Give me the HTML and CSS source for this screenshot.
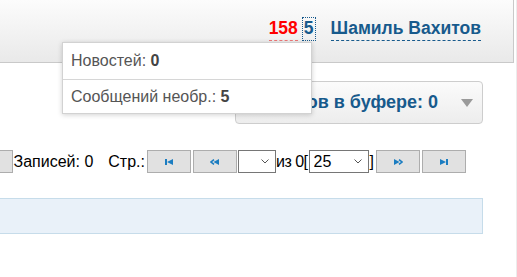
FILE: index.html
```html
<!DOCTYPE html>
<html lang="ru">
<head>
    <meta charset="UTF-8">
    <meta name="viewport" content="width=device-width, initial-scale=1.0">
    <title>Документы</title>
    <link rel="stylesheet" href="styles.css">
</head>
<body>
    <div class="page">
        <div class="top-bar">
            <div class="user-bar">
                <a class="cnt-news" href="#">158</a>
                <a class="cnt-msg" href="#">5</a>
                <a class="user-name" href="#">Шамиль Вахитов</a>
            </div>
        </div>
        <!-- выпадашка уведомлений -->
        <div class="notify-menu">
            <div class="notify-row first">Новостей: <b>0</b></div>
            <div class="notify-row">Сообщений необр.: <b>5</b></div>
        </div>
        <div class="content">
            <div class="tool-line">
                <div class="buffer-btn">
                    <span class="buffer-text">Документов в буфере: 0</span>
                    <span class="caret"></span>
                </div>
            </div>
            <div class="pager">
                <button class="pg-btn"></button>
                <span class="pg-total">Записей: 0</span>
                <span class="pg-label">Стр.:</span>
                <button class="pg-btn">
                    <svg width="8" height="6" viewBox="0 0 8 6"><rect x="0" y="0" width="2" height="6"/><polygon points="2,3 8,0 8,6"/></svg>
                </button>
                <button class="pg-btn sp">
                    <svg width="9" height="6" viewBox="0 0 9 6"><polyline points="4,0.6 1,3 4,5.4" fill="none" stroke-width="1.6"/><polygon points="3.5,3 9,0 9,6"/></svg>
                </button>
                <span class="sel sel-page">
                    <select><option></option></select>
                    <svg class="chev" width="8" height="5" viewBox="0 0 8 5"><polyline points="0.5,0.5 4,4 7.5,0.5"/></svg>
                </span>
                <span class="pg-of">из 0[</span>
                <span class="sel sel-size">
                    <select><option>25</option><option>50</option><option>100</option></select>
                    <svg class="chev" width="8" height="5" viewBox="0 0 8 5"><polyline points="0.5,0.5 4,4 7.5,0.5"/></svg>
                </span>
                <span class="pg-close">]</span>
                <button class="pg-btn sp">
                    <svg width="9" height="6" viewBox="0 0 9 6"><polygon points="0,0 5.5,3 0,6"/><polyline points="5,0.6 8,3 5,5.4" fill="none" stroke-width="1.6"/></svg>
                </button>
                <button class="pg-btn sp">
                    <svg width="8" height="6" viewBox="0 0 8 6"><polygon points="0,0 6,3 0,6"/><rect x="6" y="0" width="2" height="6"/></svg>
                </button>
            </div>
            <div class="grid-head"></div>
        </div>
    </div>
</body>
</html>
```

FILE: styles.css
```css
body,div,a,span,button,select {
    margin: 0;
    padding: 0;
}
body {
    font-family: "Liberation Sans", Arial, sans-serif;
    font-size: 16px;
    color: #000;
    background: #fff;
}
.page {
    position: relative;
    width: 516px;
    height: 277px;
    border-right: 1px solid #ececec;
    overflow: hidden;
}
.top-bar {
    width: 513px;
    height: 62px;
    background: linear-gradient(#fcfcfc, #e9e9e9);
    border-bottom: 1px solid #c9c9c9;
    border-right: 1px solid #c9c9c9;
}
.top-bar .user-bar {
    display: flex;
    justify-content: flex-end;
    align-items: baseline;
    padding: 18px 32px 0 0;
    font-size: 17.5px;
}
.top-bar .user-bar a {
    font-weight: 700;
    text-decoration: none;
    padding-bottom: 1px;
}
.top-bar .cnt-news {
    color: #f00;
    border-bottom: 1px dashed #e77;
}
.top-bar .cnt-msg {
    color: #175a8c;
    margin-left: 5px;
    padding: 0 1px;
    outline: 1px dotted #175a8c;
}
.top-bar .user-name {
    color: #175a8c;
    margin-left: 16px;
    border-bottom: 1px dashed #175a8c;
}
.notify-menu {
    position: absolute;
    left: 62px;
    top: 42px;
    width: 248px;
    background: #fff;
    border: 1px solid #d2d2d2;
    box-shadow: 0 1px 5px rgba(0,0,0,.18);
    z-index: 10;
    color: #555;
}
.notify-menu .notify-row {
    padding: 8px 8px 7px;
    line-height: 18px;
}
.notify-menu .notify-row.first {
    padding: 9px 8px 9px;
    border-bottom: 1px solid #d6d6d6;
}
.notify-menu b {
    color: #444;
}
.content {
    padding: 18px 33px 0 0;
}
.tool-line {
    display: flex;
    justify-content: flex-end;
}
.buffer-btn {
    width: 248px;
    height: 43px;
    box-sizing: border-box;
    display: flex;
    align-items: center;
    justify-content: flex-end;
    padding-right: 9px;
    border: 1px solid #cdcdcd;
    border-radius: 4px;
    background: linear-gradient(#fbfbfb, #ededed);
    overflow: hidden;
    white-space: nowrap;
}
.buffer-btn .buffer-text {
    color: #175a8c;
    font-size: 18px;
    font-weight: 700;
}
.buffer-btn .caret {
    width: 0;
    height: 0;
    margin-left: 23px;
    border-left: 6px solid transparent;
    border-right: 6px solid transparent;
    border-top: 8px solid #9a9a9a;
}
.pager {
    display: flex;
    justify-content: flex-end;
    align-items: center;
    height: 23px;
    margin-top: 26px;
    padding-right: 17px;
    white-space: nowrap;
}
.pager > * {
    flex-shrink: 0;
}
.pager .pg-btn {
    width: 44px;
    height: 23px;
    display: flex;
    align-items: center;
    justify-content: center;
    background: #e1e1e1;
    border: 1px solid #adadad;
    fill: #1b7dc1;
    stroke: #1b7dc1;
}
.pager .pg-btn.sp {
    margin-left: 2px;
}
.pager .pg-btn svg rect,
.pager .pg-btn svg polygon {
    stroke: none;
}
.pager .pg-total {
    margin-left: 1px;
    margin-right: 15px;
}
.pager .pg-label {
    margin-right: 2px;
}
.pager .sel {
    position: relative;
    height: 23px;
    box-sizing: border-box;
    border: 1px solid #767676;
    background: #fff;
    display: flex;
}
.pager .sel select {
    appearance: none;
    border: 0;
    background: transparent;
    font-family: inherit;
    font-size: 16px;
    color: #000;
    padding: 0 4px;
    width: 100%;
    height: 21px;
    outline: none;
}
.pager .sel .chev {
    position: absolute;
    right: 6px;
    top: 8px;
    fill: none;
    stroke: #555;
    stroke-width: 1;
    pointer-events: none;
}
.pager .sel-page {
    width: 38px;
    margin-left: 1px;
}
.pager .sel-size {
    width: 60px;
    margin-left: 1px;
}
.pager .pg-of {
    letter-spacing: -0.5px;
}
.pager .pg-close {
    margin-left: 1px;
}
.grid-head {
    margin-top: 25px;
    height: 34px;
    background: #e9f1f9;
    border: 1px solid #c6dcea;
    border-left: 0;
}
```
